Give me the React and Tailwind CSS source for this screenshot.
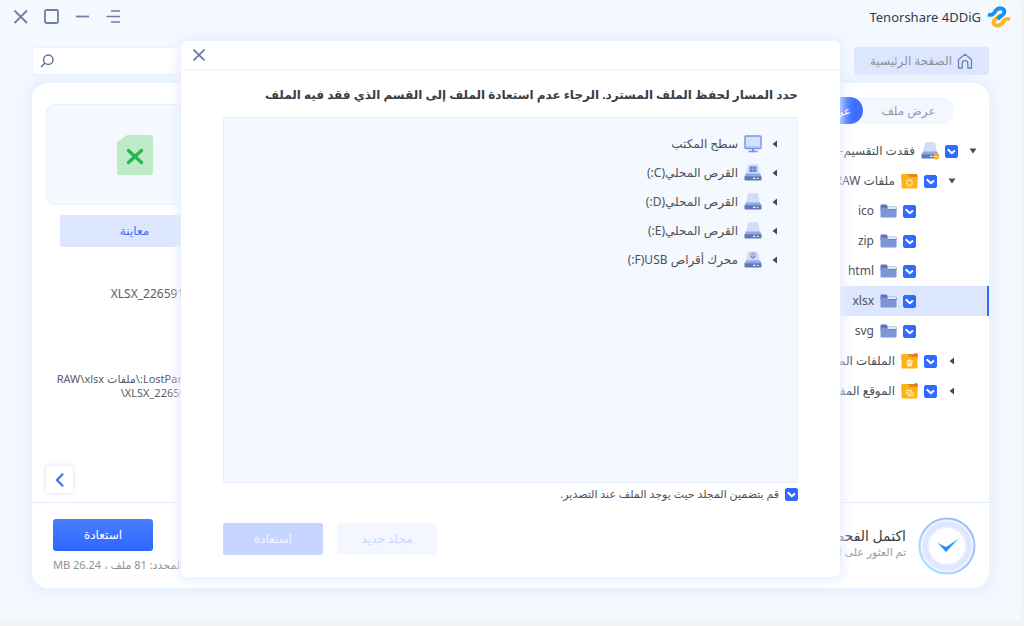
import React from "react";

function Check({ id, label }) {
  return (
    <span className="grid h-[13px] w-[13px] shrink-0">
      <input
        id={id}
        type="checkbox"
        defaultChecked
        aria-label={label}
        className="col-start-1 row-start-1 h-[13px] w-[13px] appearance-none rounded-[2px] border border-[#2f6bff] bg-white checked:bg-[#2f6bff]"
      />
      <svg viewBox="0 0 13 13" className="pointer-events-none col-start-1 row-start-1 h-[13px] w-[13px]" fill="none">
        <path d="M2.700 4.300 6.800 8.200 10 5.400" stroke="#fff" strokeWidth="2" />
      </svg>
    </span>
  );
}

function Caret({ open }) {
  return (
    <svg viewBox="0 0 10 10" className="h-2.5 w-2.5 shrink-0" fill="#434a5c">
      {open ? <path d="M1.5 2.5h7L5 7.5z" /> : <path d="M7 1.500v7L2.500 5z" />}
    </svg>
  );
}

function DriveIcon({ kind }) {
  return (
    <svg viewBox="0 0 18 18" className="h-[18px] w-[18px] shrink-0">
      <path d="M3.800 1q.2-.8 1-.8h8.400q.8 0 1 .8l1.900 10H1.900z" fill="#d3dcf5" />
      <path d="M1.900 9.500h14.200l1.400 3.300H.5z" fill="#8ea8ea" />
      <path d="M.5 12.300h17v3.200q0 1-1 1h-15q-1 0-1-1z" fill="#6079b5" />
      {kind === "system" && (
        <g fill="#5e80d8">
          <rect x="5.500" y="2.500" width="7" height="5.500" />
          <path d="M9 2.500V8M5.500 5.200h7" stroke="#a8bcf0" strokeWidth=".7" />
        </g>
      )}
      {kind === "usb" && (
        <g fill="none" stroke="#7693dd" strokeWidth="1">
          <circle cx="9" cy="4.5" r="2.5" />
          <path d="M9 3v5M7 5l2 2 2-2" />
        </g>
      )}
      <path d="M9 14.3h2.5M13 14.3h1.5" stroke="#eef2ff" strokeWidth="1.2" />
      {kind === "lost" && (
        <g>
          <circle cx="15" cy="14.500" r="3" fill="#ffab1f" />
          <path d="M13.300 14.500h3.400" stroke="#ffe9b0" strokeWidth=".8" />
        </g>
      )}
    </svg>
  );
}

function MonitorIcon() {
  return (
    <svg viewBox="0 0 18 18" className="h-[18px] w-[18px] shrink-0">
      <rect x="1" y="1" width="16" height="12.5" rx="1" fill="#d5e0fb" stroke="#7895e6" strokeWidth="1.4" />
      <path d="M1 12h16" stroke="#9cb3f0" />
      <path d="M8 13.5h2V16H8z" fill="#7895e6" />
      <path d="M4.5 16.5h9" stroke="#7895e6" strokeWidth="1.6" />
    </svg>
  );
}

function BlueFolder() {
  return (
    <svg viewBox="0 0 17 16" className="h-4 w-[17px] shrink-0">
      <path d="M.5 2.500q0-1 1-1h5l1.500 2h7.500q1 0 1 1V7H.5z" fill="#5973b5" />
      <path d="M7.500 3.500H16v2.500H7.500z" fill="#dfe7fb" />
      <path d="M.5 4.800h6L8 6.500h8.500v7q0 1-1 1h-14q-1 0-1-1z" fill="#7b95d6" />
    </svg>
  );
}

function YellowFolder({ kind }) {
  return (
    <svg viewBox="0 0 17 16" className="h-4 w-[17px] shrink-0">
      <path d="M.5 2q0-1 1-1h14q1 0 1 1v5H.5z" fill="#e58a10" />
      <path d="M.5 2q0-1 1-1h5.500l1.500 3h8v10.500q0 1-1 1h-14q-1 0-1-1z" fill="#fbb417" />
      {kind === "raw" && <circle cx="8.5" cy="9.8" r="2.8" fill="none" stroke="#ffe08a" strokeWidth="1.3" />}
      {kind === "deleted" && <path d="M5 7.500h7V9H5zM5.700 9.500h5.600l-.7 4H6.400zM7 6.500h3v1H7z" fill="#ffedc4" />}
      {kind === "lost" && (
        <path d="M4.500 7.500H10V10h3M4.500 10h3v2.500H13" fill="none" stroke="#ffe3a1" strokeWidth="1.3" />
      )}
      {kind !== "raw" && <circle cx="15" cy="2" r="2" fill="#f0703a" />}
    </svg>
  );
}

const treeRows = [
  { id: "part", text: "فقدت التقسيم-", pad: "pr-[11px]", open: true, icon: <DriveIcon kind="lost" /> },
  { id: "raw", text: "ملفات RAW", pad: "pr-8", open: true, icon: <YellowFolder kind="raw" /> },
  { id: "ico", text: "ico", pad: "pr-[53px]", leaf: true, icon: <BlueFolder /> },
  { id: "zip", text: "zip", pad: "pr-[53px]", leaf: true, icon: <BlueFolder /> },
  { id: "html", text: "html", pad: "pr-[53px]", leaf: true, icon: <BlueFolder /> },
  { id: "xlsx", text: "xlsx", pad: "pr-[53px]", leaf: true, selected: true, icon: <BlueFolder /> },
  { id: "svg", text: "svg", pad: "pr-[53px]", leaf: true, icon: <BlueFolder /> },
  { id: "deleted", text: "الملفات المحذوفة", pad: "pr-8", icon: <YellowFolder kind="deleted" /> },
  { id: "lost", text: "الموقع المفقود", pad: "pr-8", icon: <YellowFolder kind="lost" /> },
];

const drives = [
  { text: "سطح المكتب", icon: <MonitorIcon /> },
  { text: "القرص المحلي(C:)", icon: <DriveIcon kind="system" /> },
  { text: "القرص المحلي(D:)", icon: <DriveIcon /> },
  { text: "القرص المحلي(E:)", icon: <DriveIcon /> },
  { text: "محرك أقراص USB\u200f(F:)", icon: <DriveIcon kind="usb" /> },
];

function TitleBar() {
  return (
    <header className="flex h-[34px] items-center justify-between pr-2.5 pl-[13px]">
      <div className="flex items-center gap-1.5">
        <svg viewBox="0 0 24 22" className="h-[22px] w-6" fill="none" strokeLinejoin="round">
          <path d="M13.500 9 8 13.500c-2.500 2.200-1.500 5.500 1.500 6 3.500.5 5.500-1.500 7.200-4.500 1.300-2.300 3-2.700 6.300-1.800" stroke="#fbb62b" strokeWidth="3.800" />
          <path d="M1 8.600c3.300.9 4.800.4 6.300-1.900C9 3.700 11 1.900 14.300 2.300c3.200.5 4.200 4 1.700 6.200L10.500 13" stroke="#1593f2" strokeWidth="3.800" />
        </svg>
        <h1 dir="ltr" className="text-[13px] leading-5 text-[#343947]">Tenorshare 4DDiG</h1>
      </div>
      <div className="flex items-center gap-4 pb-0.5 text-[#6f7ea8]">
        <button aria-label="القائمة">
          <svg viewBox="0 0 15 15" className="h-[15px] w-[15px]" fill="none" stroke="currentColor" strokeWidth="1.600">
            <path d="M5 2h9M.5 7.500H14M5 13h9" />
          </svg>
        </button>
        <button aria-label="تصغير">
          <svg viewBox="0 0 15 15" className="h-[15px] w-[15px]" fill="none" stroke="currentColor" strokeWidth="1.800">
            <path d="M1 7.500h13" />
          </svg>
        </button>
        <button aria-label="تكبير">
          <svg viewBox="0 0 15 15" className="h-[15px] w-[15px]" fill="none" stroke="currentColor" strokeWidth="1.800">
            <rect x="1" y="1" width="13" height="13" rx="1.500" />
          </svg>
        </button>
        <button aria-label="إغلاق">
          <svg viewBox="0 0 15 15" className="h-[15px] w-[15px]" fill="none" stroke="currentColor" strokeWidth="1.800">
            <path d="m1.500 1.500 12.500 12.500M14 1.500 1.500 14" />
          </svg>
        </button>
      </div>
    </header>
  );
}

function Toolbar() {
  return (
    <div className="flex items-center justify-between pt-[13px] pr-8 pl-8">
      <a href="#home" className="flex h-7 w-[135px] items-center gap-[5px] rounded-[3px] bg-[#dce6ff] pr-4 text-xs text-[#8d8f99]">
        <svg viewBox="0 0 16 16" className="h-4 w-4 shrink-0" fill="none" stroke="#6f7fae" strokeWidth="1.300">
          <path d="M1.500 15V6.500L8 1.300l6.500 5.200V15h-3.700v-4.500a2.800 2.800 0 0 0-5.600 0V15z" />
        </svg>
        الصفحة الرئيسية
      </a>
      <label className="flex h-7 w-[205px] items-center rounded-[2px] border border-[#ebf1ff] bg-white">
        <input type="text" aria-label="بحث" className="h-full min-w-0 grow bg-transparent px-2 text-xs outline-none" />
        <svg viewBox="0 0 14 14" className="ml-[7px] h-3.5 w-3.5 shrink-0" fill="none" stroke="#5f6b92" strokeWidth="1.400">
          <circle cx="8.300" cy="5.700" r="4.700" />
          <path d="M5 9 1 13" />
        </svg>
      </label>
    </div>
  );
}

function FileTree() {
  return (
    <nav className="w-[230px] shrink-0 pt-3.5">
      <div className="mr-[35px] flex h-[27px] w-[170px] rounded-full bg-[#f3f7ff] text-xs">
        <button className="w-[91px] text-[#999ba3]">عرض ملف</button>
        <button className="grow rounded-full bg-[#3a6fff] pr-3 text-right text-white">عرض شجرة</button>
      </div>
      <ul className="pt-3">
        {treeRows.map((row) => (
          <li
            key={row.id}
            className={`flex h-[30px] items-center whitespace-nowrap text-xs text-[#4e5057] ${row.pad} ${
              row.selected ? "bg-[#dce6ff] shadow-[inset_2px_0_0_#dce6ff,inset_-2px_0_0_#2f6bff]" : ""
            }`}
          >
            {row.leaf ? (
              <span className="w-5 shrink-0" />
            ) : (
              <span className="flex w-5 shrink-0"><Caret open={row.open} /></span>
            )}
            <Check id={`tree-${row.id}`} />
            <label htmlFor={`tree-${row.id}`} className="flex items-center gap-1.5 pr-1.5">
              {row.icon}
              <span>{row.text}</span>
            </label>
          </li>
        ))}
      </ul>
    </nav>
  );
}

function Details() {
  return (
    <aside className="flex w-[206px] shrink-0 flex-col pt-[21px] pr-[15px] pl-3.5">
      <div className="flex h-[101px] items-center justify-center rounded-lg border border-[#e9effb] bg-[#f4f8ff]">
        <svg viewBox="0 0 36 40" className="h-10 w-9">
          <path d="M10 0h24q2 0 2 2v36q0 2-2 2H2q-2 0-2-2V7z" fill="#bdebc7" />
          <path d="m11.500 15.500 13 12m0-12-13 12" stroke="#27b84b" strokeWidth="3.400" strokeLinecap="round" />
        </svg>
      </div>
      <button className="mx-3.5 mt-2.5 h-8 rounded-[3px] bg-[#dce6ff] text-xs text-[#3f70f5]">معاينة</button>
      <dl className="px-3.5 pt-10 text-xs leading-3.5 text-[#5a5c64]">
        <dd className="h-[43px] whitespace-nowrap">XLSX_226591.xlsx</dd>
        <dd className="h-[42px]">8.9 B</dd>
        <dd className="text-[11px] leading-3.5 whitespace-nowrap">
          LostPartition:\ملفات RAW\xlsx<br />XLSX_226591.xls\
        </dd>
      </dl>
      <button aria-label="السابق" className="mt-auto mb-[9px] flex h-[27px] w-[27px] items-center justify-center self-end rounded-[3px] bg-white shadow-[0_0_4px_1px_#e4e9fa]">
        <svg viewBox="0 0 14 14" className="h-3.5 w-3.5" fill="none" stroke="#3f73f7" strokeWidth="2.200">
          <path d="M10 .8 4 7l6 6.200" />
        </svg>
      </button>
    </aside>
  );
}

function Footer() {
  return (
    <footer className="flex h-[86px] items-center justify-between border-t border-[#e3ecff] pr-[13px] pl-[21px]">
      <div className="flex items-center gap-3">
        <svg viewBox="0 0 58 58" className="h-[58px] w-[58px]">
          <defs>
            <linearGradient id="ring" x1="1" y1="0" x2="0" y2="1">
              <stop offset="0" stopColor="#a3b7ff" />
              <stop offset=".5" stopColor="#a4c6fc" />
              <stop offset="1" stopColor="#9eebff" />
            </linearGradient>
            <linearGradient id="tick" x1="0" y1="0" x2="1" y2="0">
              <stop offset="0" stopColor="#56b7fb" />
              <stop offset=".4" stopColor="#1f88ee" />
              <stop offset="1" stopColor="#60c4ff" />
            </linearGradient>
          </defs>
          <circle cx="29" cy="29" r="27.500" fill="#eef3ff" stroke="url(#ring)" strokeWidth="2" />
          <circle cx="29" cy="29" r="22" fill="none" stroke="#dfe7ff" strokeWidth="5" />
          <circle cx="29" cy="29" r="18.500" fill="#fff" stroke="#e9efff" />
          <path d="m19 25.500 9 4.500 13.500-9L28 35z" fill="url(#tick)" />
        </svg>
        <div className="pb-1.5 whitespace-nowrap">
          <p className="text-sm leading-4.5 text-[#3b3d44]">اكتمل الفحص</p>
          <p className="text-[11px] leading-3.5 text-[#999ba3]">تم العثور على الملفات</p>
        </div>
      </div>
      <div className="flex flex-col items-end gap-1.5">
        <button className="h-8 w-[100px] rounded-[3px] bg-linear-to-b from-[#4b7dff] to-[#2c66ff] text-xs text-white">استعادة</button>
        <p className="text-[11px] leading-4 text-[#8f9199]">المحدد: 81 ملف ، 26.24 MB</p>
      </div>
    </footer>
  );
}

function SaveDialog() {
  return (
    <section role="dialog" aria-labelledby="save-title" className="absolute inset-x-[181px] top-[41px] rounded-md bg-white pb-[22px] shadow-[0_0_12px_3px_#e6edff]">
      <div className="flex h-[29px] items-center justify-end border-b border-[#eef2ff] pl-3">
        <button aria-label="إغلاق">
          <svg viewBox="0 0 12 12" className="h-3 w-3" fill="none" stroke="#68769f" strokeWidth="1.600">
            <path d="m.5.5 11 11M11.500.5.5 11.500" />
          </svg>
        </button>
      </div>
      <div className="px-[42px] pt-3.5">
        <h2 id="save-title" className="h-[33px] text-xs leading-5.5 font-bold whitespace-nowrap text-[#3b3d44]">
          حدد المسار لحفظ الملف المسترد. الرجاء عدم استعادة الملف إلى القسم الذي فقد فيه الملف
        </h2>
        <ul className="min-h-[366px] border border-[#e8f0ff] bg-[#f4f8ff] pt-[11px] pr-[17px]">
          {drives.map((drive) => (
            <li key={drive.text} className="flex h-[29px] items-center text-xs text-[#4e5057]">
              <button aria-label="توسيع" className="ml-2"><Caret /></button>
              {drive.icon}
              <span className="mr-1.5">{drive.text}</span>
            </li>
          ))}
        </ul>
        <div className="flex items-center gap-1.5 pt-px">
          <Check id="keep-folder" />
          <label htmlFor="keep-folder" className="text-[11px] leading-5 text-[#4e5057]">
            قم بتضمين المجلد حيث يوجد الملف عند التصدير.
          </label>
        </div>
        <div className="flex justify-end gap-3.5 pt-[19px]">
          <button className="h-8 w-[100px] rounded-[3px] bg-[#f4f7ff] text-xs text-[#c8d6fb]">مجلد جديد</button>
          <button className="h-8 w-[100px] rounded-[3px] bg-[#c5d5ff] text-xs text-[#f2f6ff]">استعادة</button>
        </div>
      </div>
    </section>
  );
}

export default function App() {
  return (
    <div dir="rtl" className="flex min-h-screen flex-col overflow-hidden bg-[#f3f3f3] pr-[3px] pb-[5px] font-['Noto_Sans','DejaVu_Sans',sans-serif]">
      <div className="relative flex grow flex-col rounded-md bg-[#f4f8ff] pb-[33px]">
        <TitleBar />
        <Toolbar />
        <main className="mx-8 mt-2 flex grow flex-col rounded-2xl bg-white shadow-[0_0_14px_4px_#e4eeff]">
          <div className="flex grow justify-between">
            <FileTree />
            <Details />
          </div>
          <Footer />
        </main>
        <SaveDialog />
      </div>
    </div>
  );
}
